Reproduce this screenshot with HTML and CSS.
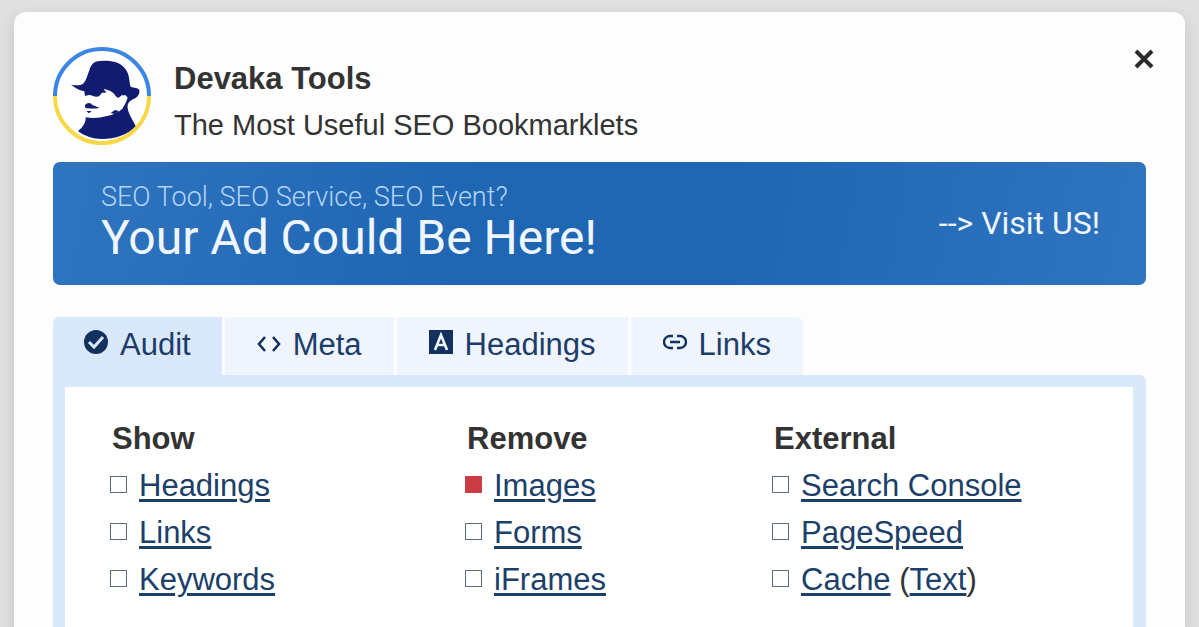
FILE: index.html
```html
<!DOCTYPE html>
<html lang="en">
<head>
  <meta charset="utf-8">
  <title>Devaka Tools</title>
  <link rel="stylesheet" href="styles.css">
</head>
<body>
  <div class="popup">
    <header class="header">
      <svg class="logo" viewBox="38 51 294 294" aria-hidden="true">
        <circle cx="185" cy="198" r="141" fill="#fff"/>
        <path d="M44 198a141 141 0 0 1 282 0" fill="none" stroke="#3b86e2" stroke-width="12"/>
        <path d="M44 198a141 141 0 0 0 282 0" fill="none" stroke="#f8d849" stroke-width="12"/>
        <path fill="#111b70" d="M92 164C106 166 119 167 128 162C138 152 141 136 147 121C151 107 159 96 171 94C187 91 208 92 224 96C244 101 262 120 265 138C268 151 268 166 272 171C281 174 293 173 297 180C299 190 292 201 284 205C274 210 265 214 262 224C260 236 265 248 272 262L286 288C263 314 225 327 185 327C158 327 130 317 113 303C128 292 137 277 136 262C160 266 180 263 200 258C218 255 235 246 246 236C252 226 259 214 262 203L256 196L244 196L234 204L226 199C222 189 212 181 190 177L198 188L185 188L176 199C162 203 154 194 145 195L134 198L132 184C119 182 107 175 92 164Z"/>
        <path fill="#111b70" d="M134 226C140 216 152 217 156 225L177 233C164 238 150 234 135 235ZM138 243L154 243L146 250ZM211 249L224 240L236 243L224 252Z"/>
      </svg>
      <div class="titles">
        <h1>Devaka Tools</h1>
        <p>The Most Useful SEO Bookmarklets</p>
      </div>
      <button class="close" type="button" aria-label="Close">
        <svg viewBox="0 0 20 20"><path d="M2 2l16 16M18 2L2 18" fill="none" stroke="#2b2b2b" stroke-width="4"/></svg>
      </button>
    </header>

    <a class="banner" href="#">
      <span class="banner-text">
        <span class="banner-small">SEO Tool, SEO Service, SEO Event?</span>
        <span class="banner-big">Your Ad Could Be Here!</span>
      </span>
      <span class="banner-visit">--&gt; Visit US!</span>
    </a>

    <nav class="tabs">
      <button class="tab active" type="button">
        <svg viewBox="0 0 24 24"><circle cx="12" cy="12" r="12" fill="#12315f"/><path d="M5 12l5 5 9-10" fill="none" stroke="#d9e8fb" stroke-width="3"/></svg>
        Audit
      </button>
      <button class="tab" type="button">
        <svg viewBox="0 0 24 24"><path d="M8 7l-6 7 6 7M16 7l6 7-6 7" fill="none" stroke="#12315f" stroke-width="2.6"/></svg>
        Meta
      </button>
      <button class="tab" type="button">
        <svg viewBox="0 0 24 24"><path d="M0 0h24v24H0z" fill="#12315f"/><path d="M6 20l6-15 6 15M8 15h8" fill="none" stroke="#eff4fd" stroke-width="2.6"/></svg>
        Headings
      </button>
      <button class="tab" type="button">
        <svg viewBox="0 0 24 24"><path d="M10 6H7a6 6 0 0 0 0 12h3M14 6h3a6 6 0 0 1 0 12h-3M7 12h10" fill="none" stroke="#12315f" stroke-width="2.4"/></svg>
        Links
      </button>
    </nav>

    <main class="panel">
      <section>
        <h2>Show</h2>
        <ul>
          <li><input type="checkbox" aria-labelledby="show-headings"><a href="#" id="show-headings">Headings</a></li>
          <li><input type="checkbox" aria-labelledby="show-links"><a href="#" id="show-links">Links</a></li>
          <li><input type="checkbox" aria-labelledby="show-keywords"><a href="#" id="show-keywords">Keywords</a></li>
        </ul>
      </section>
      <section>
        <h2>Remove</h2>
        <ul>
          <li><input type="checkbox" aria-labelledby="remove-images" checked><a href="#" id="remove-images">Images</a></li>
          <li><input type="checkbox" aria-labelledby="remove-forms"><a href="#" id="remove-forms">Forms</a></li>
          <li><input type="checkbox" aria-labelledby="remove-iframes"><a href="#" id="remove-iframes">iFrames</a></li>
        </ul>
      </section>
      <section>
        <h2>External</h2>
        <ul>
          <li><input type="checkbox" aria-labelledby="search-console"><a href="#" id="search-console">Search Console</a></li>
          <li><input type="checkbox" aria-labelledby="pagespeed"><a href="#" id="pagespeed">PageSpeed</a></li>
          <li><input type="checkbox" aria-labelledby="cache"><span><a href="#" id="cache">Cache</a> (<a href="#">Text</a>)</span></li>
        </ul>
      </section>
    </main>
  </div>
</body>
</html>
```
FILE: styles.css
```css
* {
  box-sizing: border-box;
}

body {
  display: flex;
  min-height: 100vh;
  margin: 0;
  padding: 12px 14px 0;
  background-color: #e0e0e0;
  color: #333;
  font-family: "Liberation Sans", Arial, sans-serif;
  font-size: 31px;
  line-height: 47px;
}

h1, h2, p, ul {
  margin: 0;
  padding: 0;
}

h1, h2 {
  font-size: 31px;
}

.popup {
  display: flex;
  flex-direction: column;
  flex: 1;
  padding: 35px 39px 0;
  border-radius: 12px 12px 0 0;
  background-color: #fdfdfd;
  box-shadow: 0 6px 16px rgba(0, 0, 0, 0.12);
}

.header {
  display: flex;
  align-items: flex-start;
  margin-bottom: 17px;
}

.logo {
  width: 98px;
  height: 98px;
}

.titles {
  flex: 1;
  margin: 8px 0 -4px 23px;
}

.titles p {
  font-size: 29px;
}

.close {
  margin-right: -8px;
  padding: 2px 0;
  border: 0;
  background: none;
  cursor: pointer;
}

.close svg {
  display: block;
  width: 20px;
  height: 20px;
}

.banner {
  display: flex;
  align-items: center;
  justify-content: space-between;
  padding: 20px 46px 21px 48px;
  border-radius: 7px;
  background: linear-gradient(100deg, #2f74bf, #1f66b3 38%, #1f66b3 62%, #2f74bf);
  color: #f0f6ff;
  font-family: Roboto, sans-serif;
  text-decoration: none;
}

.banner-text {
  display: flex;
  flex-direction: column;
}

.banner-small {
  color: #b5d4f6;
  font-size: 27px;
  font-weight: 300;
  line-height: 30px;
}

.banner-big {
  font-size: 48px;
  line-height: 52px;
}

.banner-visit {
  font-size: 32px;
}

.tabs {
  display: flex;
  gap: 3px;
  margin-top: 32px;
}

.tab {
  display: flex;
  gap: 12px;
  padding: 4px 32px 7px;
  border: 0;
  background-color: #eff4fd;
  color: #1c3d69;
  font: inherit;
  cursor: pointer;
}

.tab:first-child {
  border-top-left-radius: 6px;
}

.tab:last-child {
  border-top-right-radius: 6px;
}

.tab.active {
  padding: 4px 31px 7px;
  background-color: #d9e8fb;
}

.tab svg {
  width: 24px;
  height: 24px;
  margin-top: 9px;
}

.panel {
  display: grid;
  grid-template-columns: 355fr 307fr 316fr;
  flex: 1;
  padding: 28px 45px;
  border: solid #d9e8fb;
  border-width: 12px 13px 0 12px;
  border-top-right-radius: 7px;
  background-color: #fff;
}

.panel h2 {
  padding-left: 2px;
}

.panel li {
  display: flex;
  align-items: center;
  gap: 12px;
}

.panel input {
  appearance: none;
  width: 17px;
  height: 17px;
  margin: 0 0 2px;
  border: 1px solid #5d6c86;
}

.panel input:checked {
  border-color: #cc4046;
  background-color: #c93c43;
}

.panel a {
  color: #1c4069;
  text-decoration-thickness: 3px;
  text-underline-offset: 3px;
}
```
